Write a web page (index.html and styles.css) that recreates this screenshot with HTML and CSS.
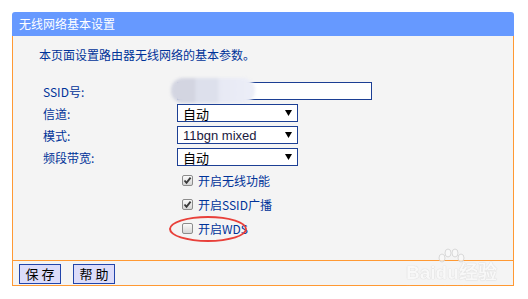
FILE: index.html
```html
<!doctype html>
<html lang="zh-CN">
	<head>
		<meta charset="UTF-8" />
		<title>无线网络基本设置</title>
		<link rel="stylesheet" href="styles.css">
	</head>
	<body>
		<div class="panel">
			<div class="panel-title">无线网络基本设置</div>
			<div class="panel-body">
				<p class="intro">本页面设置路由器无线网络的基本参数。</p>
				<div class="form">
					<div class="row">
						<label class="field-label" for="ssid">SSID号:</label>
						<input type="text" id="ssid" class="text-input" />
						<span class="blur"></span>
					</div>
					<div class="row">
						<span class="field-label">信道:</span>
						<div class="select"><span>自动</span><svg width="7" height="6" viewBox="0 0 7 6"><path d="M0 0H7L3.5 6Z" fill="#000"/></svg></div>
					</div>
					<div class="row">
						<span class="field-label">模式:</span>
						<div class="select"><span class="latin">11bgn mixed</span><svg width="7" height="6" viewBox="0 0 7 6"><path d="M0 0H7L3.5 6Z" fill="#000"/></svg></div>
					</div>
					<div class="row">
						<span class="field-label">频段带宽:</span>
						<div class="select"><span>自动</span><svg width="7" height="6" viewBox="0 0 7 6"><path d="M0 0H7L3.5 6Z" fill="#000"/></svg></div>
					</div>
					<div class="check-row">
						<span class="checkbox checked"><svg width="9" height="9" viewBox="0 0 9 9"><path d="M1.5 4.5L3.5 6.8L7.6 1.6" stroke="#3a3a3a" stroke-width="1.9" fill="none"/></svg></span>
						<span>开启无线功能</span>
					</div>
					<div class="check-row">
						<span class="checkbox checked"><svg width="9" height="9" viewBox="0 0 9 9"><path d="M1.5 4.5L3.5 6.8L7.6 1.6" stroke="#3a3a3a" stroke-width="1.9" fill="none"/></svg></span>
						<span>开启SSID广播</span>
					</div>
					<div class="check-row">
						<span class="checkbox"></span>
						<span>开启WDS</span>
						<span class="circle-mark"></span>
					</div>
				</div>
			</div>
			<div class="panel-foot">
				<button class="btn">保 存</button>
				<button class="btn">帮 助</button>
			</div>
			<div class="watermark">
				<div class="wm-logo">
					Bai<span class="wm-du">du<svg class="wm-paw" width="30" height="16" viewBox="0 0 30 16"><ellipse cx="6" cy="10" rx="3" ry="4" /><ellipse cx="12" cy="5" rx="3" ry="4" /><ellipse cx="19" cy="5" rx="3" ry="4" /><ellipse cx="25" cy="10" rx="3" ry="4" /></svg></span>经验
				</div>
				<div class="wm-url">jingyan.baidu.com</div>
			</div>
		</div>
	</body>
</html>
```
FILE: styles.css
```css
body {
	margin: 0;
	padding: 12px 0 0 12px;
	background-color: #fff;
	font-family: "Noto Sans CJK SC", "Liberation Sans", sans-serif;
	font-size: 12px;
	color: #003399;
}
.panel {
	position: relative;
	width: 502px;
}
.panel-title {
	height: 24px;
	line-height: 24px;
	padding-left: 7px;
	background-color: #6699ff;
	color: #fff;
	border-radius: 3px 3px 0 0;
}
.panel-body {
	background-color: #f4f4f4;
	border-left: 1px solid #ff9933;
	border-right: 1px solid #ff9933;
	border-bottom: 1px solid #ff9933;
	padding: 11px 0 20px;
}
.intro {
	margin: 0 0 17px;
	padding-left: 26px;
	line-height: 16px;
}
.row {
	position: relative;
	display: flex;
	align-items: center;
	height: 22px;
	padding-left: 30px;
}
.field-label {
	width: 134px;
	flex-shrink: 0;
}
.text-input {
	box-sizing: border-box;
	width: 195px;
	height: 18px;
	margin: 0;
	border: 1px solid #1c3f94;
	background-color: #fff;
	padding: 0;
}
.blur {
	position: absolute;
	left: 158px;
	top: -2px;
	width: 84px;
	height: 25px;
	border-radius: 12px;
	background: linear-gradient(to right, #d3d5e1 0%, #d3d5e1 28%, #dde0ec 30%, #dde0ec 55%, #e7e9f4 58%, #eceef7 100%);
	filter: blur(1.5px);
}
.select {
	box-sizing: border-box;
	display: flex;
	align-items: center;
	justify-content: space-between;
	width: 121px;
	height: 18px;
	border: 1px solid #1c3f94;
	background-color: #fff;
	padding: 0 5px 0 5px;
	color: #000;
	font-size: 13px;
}
.select .latin {
	font-family: "Liberation Sans", sans-serif;
	color: #1a1a40;
}
.check-row {
	position: relative;
	display: flex;
	align-items: center;
	height: 24px;
	padding-left: 169px;
	gap: 5px;
}
.checkbox {
	box-sizing: border-box;
	display: flex;
	align-items: center;
	justify-content: center;
	width: 11px;
	height: 11px;
	border: 1px solid #8c8c8c;
	border-radius: 2px;
	background: linear-gradient(#fafafa, #d6d6d6);
}
.circle-mark {
	position: absolute;
	left: 156px;
	top: 0;
	box-sizing: border-box;
	width: 78px;
	height: 26px;
	border: 2px solid #e8403a;
	border-radius: 50%;
}
.panel-foot {
	display: flex;
	gap: 12px;
	background-color: #f4f4f4;
	border-left: 1px solid #ff9933;
	border-right: 1px solid #ff9933;
	border-bottom: 1px solid #ff9933;
	padding: 3px 6px 1px;
}
.btn {
	box-sizing: border-box;
	width: 42px;
	height: 20px;
	margin: 0;
	padding: 0;
	border: 1px solid #2244aa;
	background-color: #dcdcfa;
	color: #000;
	font-family: "Noto Sans CJK SC", sans-serif;
	font-size: 13px;
	line-height: 18px;
}
.watermark {
	position: absolute;
	left: 394px;
	top: 232px;
	color: #fafafa;
	text-shadow: 0 0 1px #c8c8c8, 0 0 1px #c8c8c8;
	opacity: 0.7;
}
.wm-logo {
	font-family: "Liberation Sans", sans-serif;
	font-weight: bold;
	font-size: 19px;
	line-height: 22px;
	padding-top: 18px;
}
.wm-du {
	position: relative;
}
.wm-paw {
	position: absolute;
	left: 0;
	top: -14px;
	fill: #fafafa;
	stroke: #ccc;
}
.wm-url {
	font-family: "Liberation Sans", sans-serif;
	font-size: 11px;
	line-height: 12px;
}
```
